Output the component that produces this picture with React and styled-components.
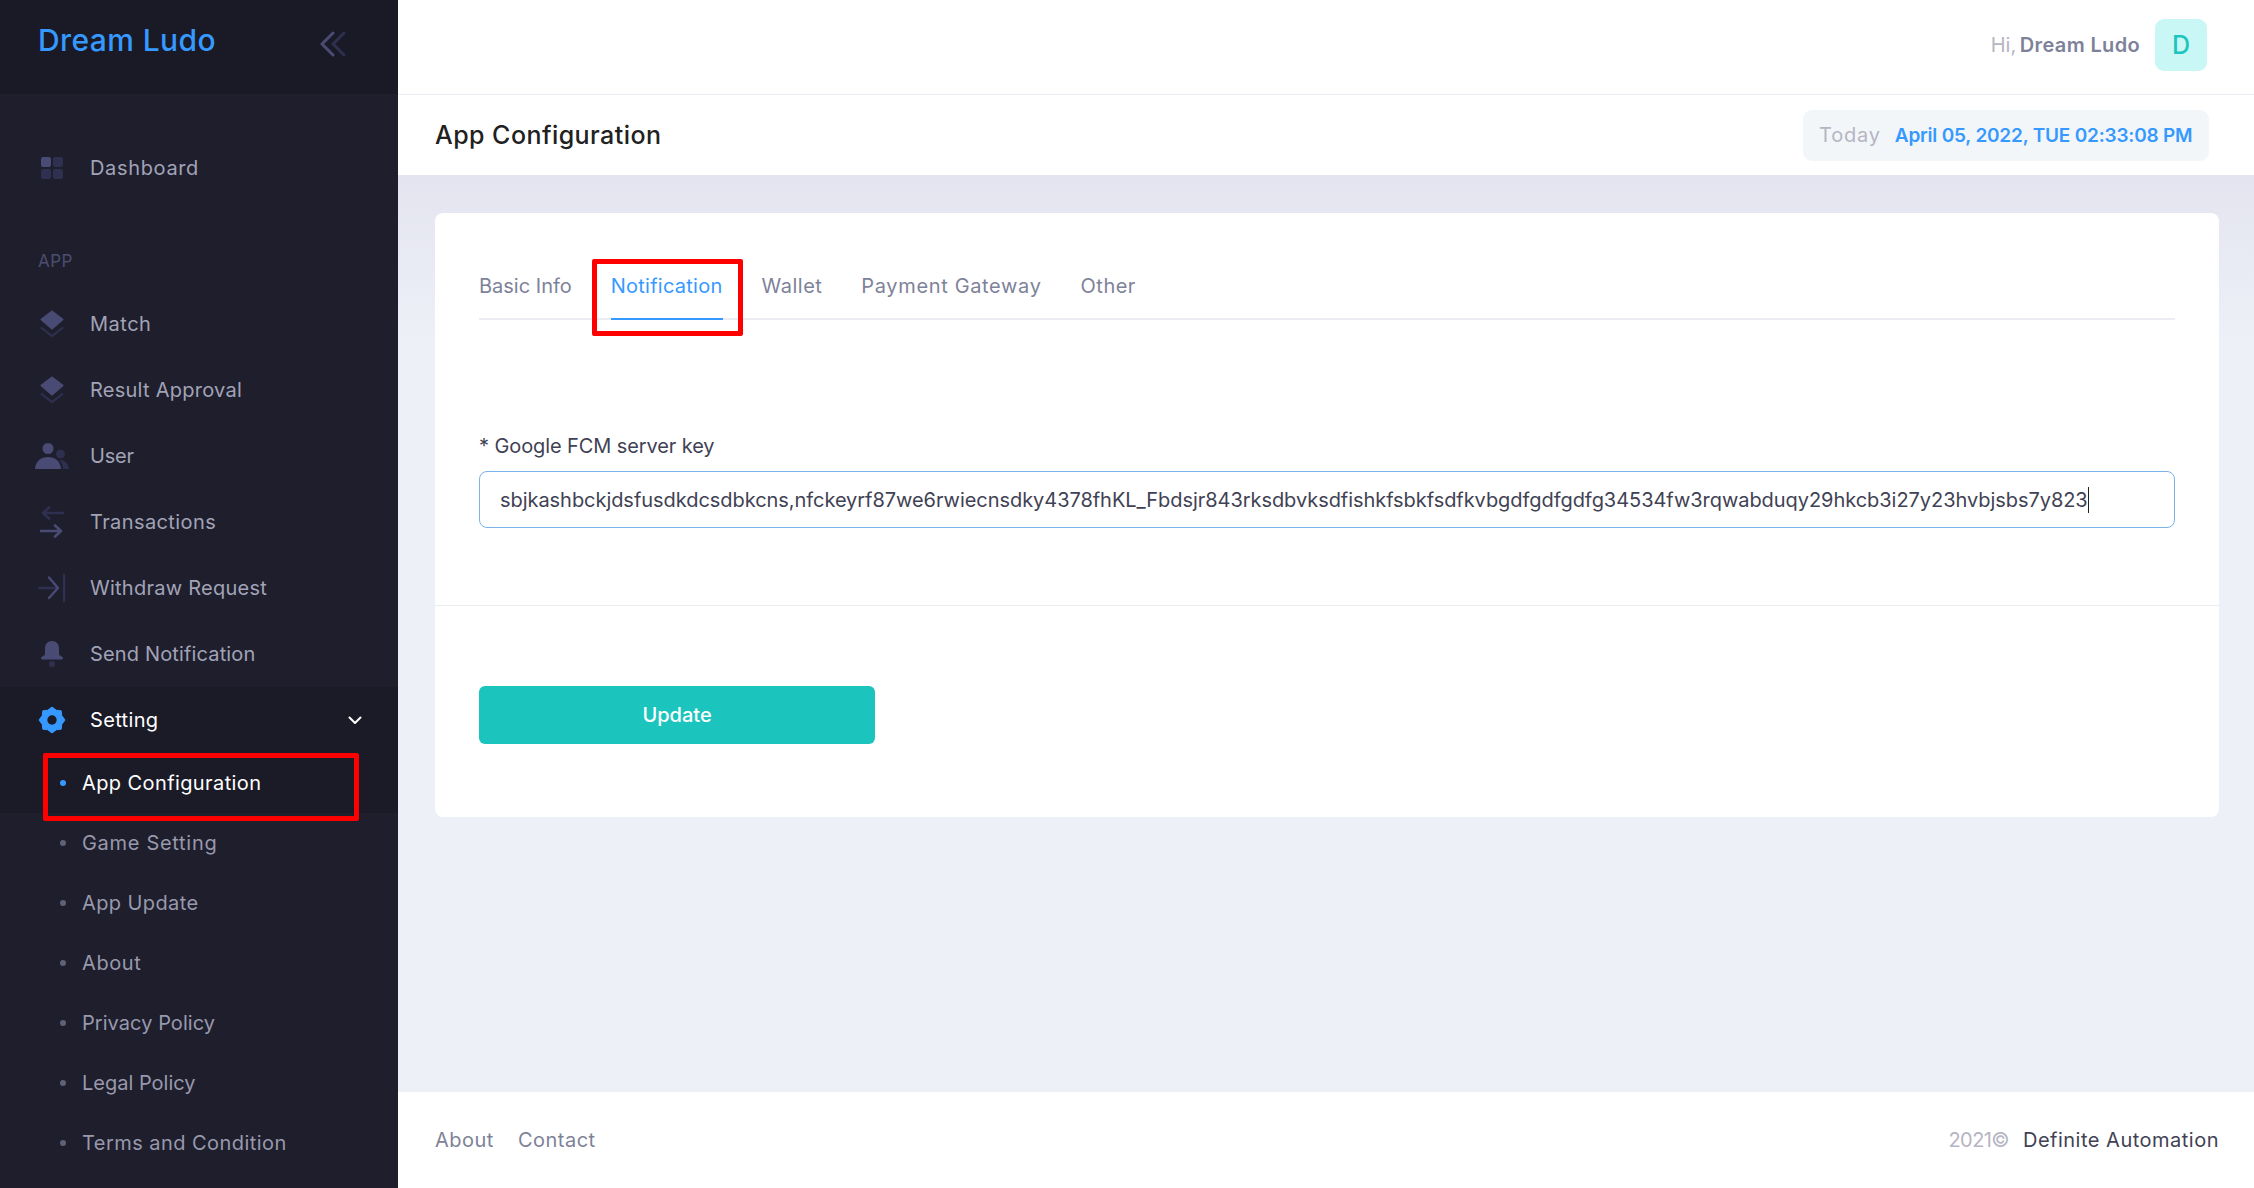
import React from "react";
import styled, { createGlobalStyle } from "styled-components";

const Global = createGlobalStyle`
  html, body { margin: 0; padding: 0; height: 100%; overflow: hidden; }
  body { font-family: Inter, "Noto Sans", "Liberation Sans", sans-serif; background: #eef0f8; }
  #root { height: 100%; }
  * { box-sizing: border-box; }
`;

const Shell = styled.div`
  display: flex;
  width: 2254px;
  height: 1188px;
  overflow: hidden;
`;
const Sidebar = styled.aside`
  width: 398px;
  flex: none;
  background: #1e1e2d;
  display: flex;
  flex-direction: column;
`;
const Brand = styled.div`
  height: 94px;
  background: #1a1a27;
  display: flex;
  align-items: flex-start;
  justify-content: space-between;
  padding: 19px 52px 0 38px;
`;
const BrandName = styled.div`
  color: #3699ff;
  font-size: 30px;
  font-weight: 500;
  letter-spacing: 0.4px;
  line-height: 42px;
`;
const Collapse = styled.svg`
  width: 26px;
  height: 26px;
  margin-top: 12px;
`;
const Menu = styled.nav`
  padding-top: 41px;
  display: flex;
  flex-direction: column;
`;
const Row = styled.div`
  height: 66px;
  flex: none;
  display: flex;
  align-items: center;
  padding: 0 36px 0 35px;
  background: ${(p) => (p.$active ? "#1b1b28" : "transparent")};
`;
const IconBox = styled.div`
  width: 34px;
  height: 34px;
  flex: none;
  margin-right: 21px;
  display: flex;
  align-items: center;
  justify-content: center;
`;
const RowLabel = styled.span`
  flex: 1;
  font-size: 20px;
  letter-spacing: ${(p) => p.$track ?? 0.35}px;
  color: ${(p) => (p.$active ? "#ffffff" : "#a2a3b7")};
`;
const Section = styled.div`
  height: 24px;
  margin: 48px 0 18px 38px;
  font-size: 17px;
  line-height: 24px;
  letter-spacing: 0.5px;
  color: #4c4e6f;
`;
const SubRow = styled.div`
  position: relative;
  height: 60px;
  flex: none;
  display: flex;
  align-items: center;
  padding-left: 60px;
  background: ${(p) => (p.$active ? "#1b1b28" : "transparent")};
`;
const Dot = styled.i`
  width: 6px;
  height: 6px;
  border-radius: 50%;
  margin-right: 16px;
  background: ${(p) => (p.$active ? "#3699ff" : "#5e6278")};
`;
const SubLabel = styled.span`
  font-size: 20px;
  letter-spacing: ${(p) => p.$track ?? 0.35}px;
  color: ${(p) => (p.$active ? "#ffffff" : "#9899ac")};
`;
const Mark = styled.div`
  position: absolute;
  border: 5px solid #ff0000;
  border-radius: 2px;
  pointer-events: none;
  left: ${(p) => p.$l}px;
  top: ${(p) => p.$t}px;
  width: ${(p) => p.$w}px;
  height: ${(p) => p.$h}px;
`;
const Main = styled.main`
  flex: 1;
  min-width: 0;
  display: flex;
  flex-direction: column;
`;
const TopBar = styled.header`
  height: 95px;
  flex: none;
  background: #fff;
  border-bottom: 1px solid #ebedf3;
  display: flex;
  align-items: flex-start;
  justify-content: flex-end;
  padding: 19px 47px 0 0;
`;
const Hi = styled.span`
  font-size: 20px;
  line-height: 24px;
  margin: 14px 15px 0 0;
  color: #b5b5c3;
  white-space: nowrap;
`;
const HiName = styled.b`
  font-weight: 600;
  color: #7e8299;
  margin-left: -2px;
  letter-spacing: 0.35px;
`;
const Avatar = styled.div`
  width: 52px;
  height: 52px;
  border-radius: 9px;
  background: #c9f7f5;
  color: #1bc5bd;
  font-size: 25px;
  font-weight: 500;
  display: flex;
  align-items: center;
  justify-content: center;
`;
const SubHeader = styled.div`
  height: 80px;
  flex: none;
  background: #fff;
  display: flex;
  align-items: center;
  justify-content: space-between;
  padding: 0 45px 0 37px;
`;
const Title = styled.h1`
  margin: 0;
  font-size: 25px;
  font-weight: 500;
  letter-spacing: 0.45px;
  color: #212121;
`;
const DatePill = styled.div`
  width: 406px;
  height: 51px;
  border-radius: 9px;
  background: #f3f6f9;
  display: flex;
  align-items: center;
  padding-left: 16px;
  font-size: 20px;
  white-space: nowrap;
`;
const DateLabel = styled.span`
  color: #b5b5c3;
  letter-spacing: 0.8px;
  margin-right: 14px;
`;
const DateValue = styled.span`
  color: #3699ff;
  font-size: 19px;
  font-weight: 600;
  letter-spacing: -0.2px;
`;
const Content = styled.div`
  flex: 1;
  padding: 38px 35px 0 37px;
  background: linear-gradient(to bottom, #e3e4ef 0, #eef0f8 170px);
`;
const Card = styled.section`
  height: 604px;
  background: #fff;
  border-radius: 8px;
`;
const CardTop = styled.div`
  height: 393px;
  padding: 45px 44px 0;
  border-bottom: 1px solid #ebedf3;
`;
const Tabs = styled.div`
  height: 62px;
  display: flex;
  border-bottom: 2px solid #ebedf3;
`;
const Tab = styled.div`
  position: relative;
  height: 62px;
  margin-right: ${(p) => p.$gap ?? 39}px;
  font-size: 20px;
  line-height: 57px;
  letter-spacing: ${(p) => p.$track ?? 0.25}px;
  white-space: nowrap;
  color: ${(p) => (p.$active ? "#3699ff" : "#7e8299")};
  border-bottom: 2px solid ${(p) => (p.$active ? "#3699ff" : "transparent")};
`;
const FieldLabel = styled.div`
  margin-top: 111px;
  font-size: 20px;
  line-height: 30px;
  letter-spacing: -0.1px;
  color: #3f4254;
`;
const Field = styled.div`
  margin-top: 10px;
  height: 57px;
  border: 1.5px solid #7ab3ec;
  border-radius: 8px;
  display: flex;
  align-items: center;
  padding-left: 20px;
  font-size: 20px;
  letter-spacing: -0.05px;
  color: #3f4254;
  white-space: nowrap;
  overflow: hidden;
`;
const Caret = styled.i`
  width: 1px;
  height: 26px;
  background: #212121;
`;
const CardBottom = styled.div`
  padding: 80px 44px 0;
`;
const UpdateButton = styled.button`
  width: 396px;
  height: 58px;
  border: 0;
  border-radius: 6px;
  background: #1bc5bd;
  color: #fff;
  font-family: inherit;
  font-size: 20px;
  font-weight: 500;
`;
const Footer = styled.footer`
  height: 96px;
  flex: none;
  background: #fff;
  display: flex;
  align-items: center;
  justify-content: space-between;
  padding: 0 35px 0 37px;
  font-size: 20px;
`;
const FooterLinks = styled.div`
  display: flex;
  gap: 24px;
  color: #7e8299;
  letter-spacing: 0.5px;
`;
const Copyright = styled.div`
  color: #b5b5c3;
  letter-spacing: -0.6px;
  white-space: nowrap;
`;
const Owner = styled.span`
  color: #3f4254;
  margin-left: 14px;
  letter-spacing: 0.5px;
`;

const C1 = "#494b74";
const C2 = "#2f3050";

const DashIcon = () => (
  <svg width="24" height="24" viewBox="0 0 24 24">
    <rect x="1" y="1" width="10" height="10" rx="2" fill={C1} />
    <rect x="13" y="1" width="10" height="10" rx="2" fill={C2} />
    <rect x="1" y="13" width="10" height="10" rx="2" fill={C2} />
    <rect x="13" y="13" width="10" height="10" rx="2" fill={C2} />
  </svg>
);
const LayersIcon = () => (
  <svg width="26" height="28" viewBox="0 0 26 28">
    <path d="M13 1.500 L23.500 9.500 13 18.500 2.500 9.500Z" fill={C1} strokeLinejoin="round" stroke={C1} strokeWidth="2" />
    <path d="M2 17.500 L13 26 24 17.500" fill="none" stroke={C2} strokeWidth="2.200" />
  </svg>
);
const UserIcon = () => (
  <svg width="34" height="28" viewBox="0 0 34 28">
    <circle cx="13" cy="6.500" r="5.500" fill={C1} />
    <circle cx="25.500" cy="12" r="4" fill={C2} stroke={C2} />
    <path d="M0 27 C0.500 19 6 15 13 15 S25.500 19 26 27Z" fill={C1} />
    <path d="M24 18 C29 17.500 33.500 21 34 27 H28 C28 23 26.500 20 24 18Z" fill={C2} />
  </svg>
);
const TransferIcon = () => (
  <svg width="24" height="32" viewBox="0 0 24 32" fill="none" strokeWidth="2.600" strokeLinecap="round" strokeLinejoin="round">
    <path d="M23 7H4M9 1.500 3 7l6 5.500" stroke={C2} />
    <path d="M1 25h19M15 19.500l6 5.500-6 5.500" stroke={C1} />
  </svg>
);
const WithdrawIcon = () => (
  <svg width="28" height="28" viewBox="0 0 28 28" fill="none" strokeWidth="2.400" strokeLinecap="round" strokeLinejoin="round">
    <path d="M1 14h17" stroke={C2} />
    <path d="M11 3.500 20 14 11 24" stroke={C1} />
    <path d="M26 1v26" stroke={C2} />
  </svg>
);
const BellIcon = () => (
  <svg width="24" height="28" viewBox="0 0 24 28">
    <path d="M12 1c-4.500 0-7 3.400-7 7.500V14c0 1.500-2.500 2-3.800 3.600C0.500 18.600 1.200 19.500 2.500 19.500h19c1.300 0 2-.9 1.300-1.900C21.500 16 19 15.500 19 14V8.500C19 4.400 16.500 1 12 1Z" fill={C1} />
    <circle cx="12" cy="24" r="3" fill={C2} />
  </svg>
);
const GearIcon = () => (
  <svg width="28" height="28" viewBox="0 0 28 28">
    <path
      fill="#3699ff"
      stroke="#3699ff"
      strokeWidth="1"
      strokeLinejoin="round"
      d="M14 1 18.300 4.200 23.200 4.800 23.800 9.700 27 14 23.800 18.300 23.200 23.200 18.300 23.800 14 27 9.700 23.800 4.800 23.200 4.200 18.300 1 14 4.200 9.700 4.800 4.800 9.700 4.200Z"
    />
    <circle cx="14" cy="14" r="4.700" fill="#1b1b28" />
  </svg>
);

const items = [
  ["Match", <LayersIcon />, 0.5],
  ["Result Approval", <LayersIcon />, 0.25],
  ["User", <UserIcon />, -0.2],
  ["Transactions", <TransferIcon />, 0.4],
  ["Withdraw Request", <WithdrawIcon />, 0.25],
  ["Send Notification", <BellIcon />, 0.15],
];
const subs = [
  ["Game Setting", 0.7],
  ["App Update", 0.4],
  ["About", 0.6],
  ["Privacy Policy", 0.05],
  ["Legal Policy", 0],
  ["Terms and Condition", 0.45],
];
const apiKey = "sbjkashbckjdsfusdkdcsdbkcns,nfckeyrf87we6rwiecnsdky4378fhKL_Fbdsjr843rksdbvksdfishkfsbkfsdfkvbgdfgdfgdfg34534fw3rqwabduqy29hkcb3i27y23hvbjsbs7y823";

export default function App() {
  return (
    <Shell>
      <Global />
      <Sidebar>
        <Brand>
          <BrandName>Dream Ludo</BrandName>
          <Collapse viewBox="0 0 26 26" fill="none" strokeWidth="3" strokeLinecap="round" strokeLinejoin="round">
            <path d="M24 2 13 13l11 11" stroke={C2} />
            <path d="M13 2 2 13l11 11" stroke={C1} />
          </Collapse>
        </Brand>
        <Menu>
          <Row>
            <IconBox><DashIcon /></IconBox>
            <RowLabel $track={0.65}>Dashboard</RowLabel>
          </Row>
          <Section>APP</Section>
          {items.map(([label, icon, track]) => (
            <Row key={label}>
              <IconBox>{icon}</IconBox>
              <RowLabel $track={track}>{label}</RowLabel>
            </Row>
          ))}
          <Row $active>
            <IconBox><GearIcon /></IconBox>
            <RowLabel $active>Setting</RowLabel>
            <svg width="14" height="9" viewBox="0 0 14 9" fill="none" stroke="#fff" strokeWidth="2" strokeLinecap="round" strokeLinejoin="round">
              <path d="M1.500 1.500 7 7l5.500-5.500" />
            </svg>
          </Row>
          <SubRow $active>
            <Dot $active />
            <SubLabel $active $track={0.4}>App Configuration</SubLabel>
            <Mark $l={43} $t={0} $w={316} $h={68} />
          </SubRow>
          {subs.map(([s, track]) => (
            <SubRow key={s}>
              <Dot />
              <SubLabel $track={track}>{s}</SubLabel>
            </SubRow>
          ))}
        </Menu>
      </Sidebar>
      <Main>
        <TopBar>
          <Hi>Hi, <HiName>Dream Ludo</HiName></Hi>
          <Avatar>D</Avatar>
        </TopBar>
        <SubHeader>
          <Title>App Configuration</Title>
          <DatePill>
            <DateLabel>Today</DateLabel>
            <DateValue>April 05, 2022, TUE 02:33:08 PM</DateValue>
          </DatePill>
        </SubHeader>
        <Content>
          <Card>
            <CardTop>
              <Tabs>
                <Tab $track={0}>Basic Info</Tab>
                <Tab $active>
                  Notification
                  <Mark $l={-19} $t={1} $w={151} $h={77} />
                </Tab>
                <Tab $track={0.5}>Wallet</Tab>
                <Tab $track={0.65}>Payment Gateway</Tab>
                <Tab $track={0.5} $gap={0}>Other</Tab>
              </Tabs>
              <FieldLabel>* Google FCM server key</FieldLabel>
              <Field>
                {apiKey}
                <Caret />
              </Field>
            </CardTop>
            <CardBottom>
              <UpdateButton>Update</UpdateButton>
            </CardBottom>
          </Card>
        </Content>
        <Footer>
          <FooterLinks>
            <span>About</span>
            <span>Contact</span>
          </FooterLinks>
          <Copyright>2021©<Owner>Definite Automation</Owner></Copyright>
        </Footer>
      </Main>
    </Shell>
  );
}
